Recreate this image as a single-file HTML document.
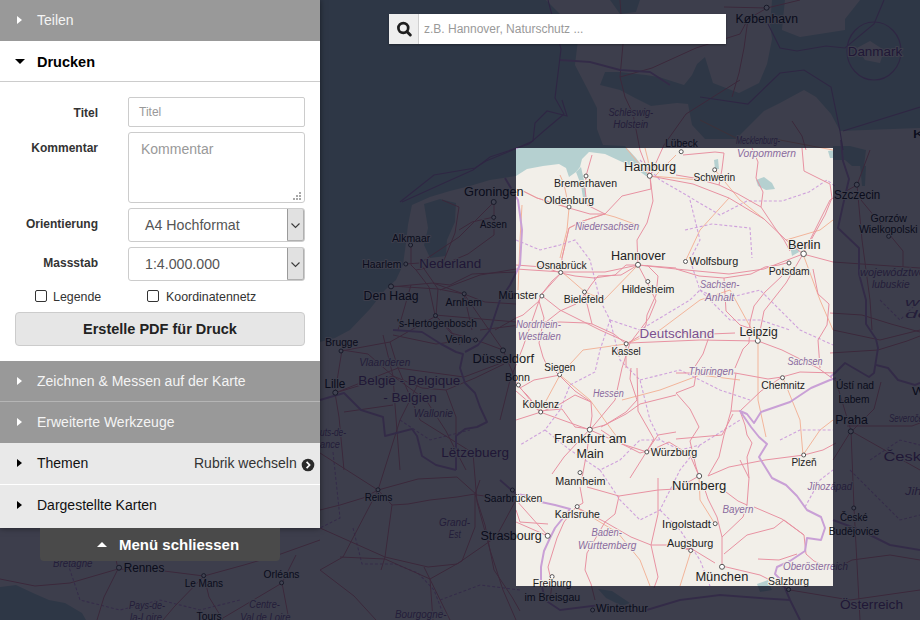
<!DOCTYPE html>
<html><head><meta charset="utf-8">
<style>
*{box-sizing:border-box}
html,body{margin:0;padding:0;width:920px;height:620px;overflow:hidden;background:#3d3f4c;font-family:"Liberation Sans",sans-serif}
#map{position:absolute;left:0;top:0;width:920px;height:620px}
#panel{position:absolute;left:0;top:0;width:320px;height:528px;background:#fff;box-shadow:0 0 6px rgba(0,0,0,.5)}
.hd{position:absolute;left:0;width:320px;height:41px;font-size:14px;line-height:41px}
.hd .t{position:absolute;left:37px;top:0}
.gray{background:#999;color:#f4f4f4}
.light{background:#e9e9e9;color:#111}
.tri-r{position:absolute;left:17px;top:16px;width:0;height:0;border-left:5.5px solid currentColor;border-top:4.5px solid transparent;border-bottom:4.5px solid transparent}
.tri-d{position:absolute;left:14.5px;top:59px;width:0;height:0;border-top:5px solid #000;border-left:5px solid transparent;border-right:5px solid transparent}
.lbl{position:absolute;font-size:12px;font-weight:bold;color:#333;text-align:right;width:98px;left:0}
.inp{position:absolute;left:128px;width:177px;border:1px solid #ccc;border-radius:2px;background:#fff}
.ph{position:absolute;color:#999}
.sel .btn{position:absolute;right:0;top:0;bottom:0;width:17px;background:#e1e1e1;border-left:1px solid #9a9a9a;border-right:1px solid #b0b0b0;border-bottom:1px solid #b0b0b0;border-radius:0 2px 2px 0}
.cb{position:absolute;width:12px;height:12px;border:1.5px solid #333;border-radius:2px;background:#fff}
</style></head><body>
<svg id="map" width="920" height="620" viewBox="0 0 920 620"><rect width="920" height="620" fill="#f2efe9"/>
<path d="M0,0 L546,0 L560,14 L578,40 L575,65 L587,88 L597,108 L597,129 L603,145 L625,146 L636,158 L649,175 L646,176 L632,166 L620,161 L605,154 L589,152 L582,159 L580,167 L576,172 L569,177 L566,168 L559,164 L543,166 L527,169 L516,176 L490,180 L470,186 L450,191 L430,197 L412,205 L408,225 L406,243 L403,265 L396,280 L385,290 L370,309 L350,330 L335,338 L320,342 L0,345 Z" fill="#b5d0d0"/>
<path d="M576,172 L581,167 L585,185 L586,198 L583,198 L581,185 Z" fill="#b5d0d0"/>
<path d="M424,204 L440,199 L456,203 L455,222 L447,240 L446,256 L430,258 L424,245 L428,228 Z" fill="#b5d0d0"/>
<path d="M600,85 L605,72 L620,72 L646,75 L659,77 L684,85 L692,75 L697,64 L705,57 L713,83 L739,93 L759,83 L767,64 L772,39 L770,24 L772,0 L785,0 L782,30 L800,37 L845,30 L845,19 L860,0 L920,0 L920,128 L840,131 L831,114 L816,97 L804,90 L780,103 L764,111 L736,139 L705,139 L692,125 L688,104 L677,103 L651,106 L635,98 L620,90 Z" fill="#b5d0d0"/>
<path d="M610,0 L640,0 L636,12 L620,14 Z" fill="#b5d0d0"/>
<path d="M0,587 L16,585 L33,593 L49,600 L65,603 L82,613 L86,620 L0,620 Z" fill="#b5d0d0"/>
<path d="M833,146 L850,146 L866,150 L864,166 L852,166 L845,160 L833,160 Z" fill="#b5d0d0"/>
<path d="M860,165 L866,166 L865,186 L862,186 Z" fill="#b5d0d0"/>
<path d="M857,48 L870,41 L884,50 L880,63 L865,60 Z" fill="#f2efe9"/>
<path d="M756,180 L764,177 L772,183 L775,189 L766,190 L758,186 Z" fill="#b5d0d0"/>
<path d="M828,151 L836,150 L836,158 L830,158 Z" fill="#b5d0d0"/>
<path d="M714,160 L718,159 L719,169 L715,169 Z" fill="#b5d0d0"/>
<path d="M790,245 L796,242 L799,252 L792,256 Z" fill="#b5d0d0"/>
<path d="M757,584 L768,580 L772,590 L760,592 Z" fill="#b5d0d0"/>
<path d="M598,589 L612,591 L630,603 L622,606 L606,598 Z" fill="#b5d0d0"/>
<g fill="none" stroke="#f3b59b" stroke-width="1"><path d="M569,208 L537,198 L523,191 L516,190"/><path d="M604,214 L583,221 L569,228 L562,258"/><path d="M569,208 L567,230 L560,258"/><path d="M569,208 L564,184 L560,175"/><path d="M522,205 L520,240 L518,290"/><path d="M650,176 L648,160 L645,148"/><path d="M650,176 L640,165 L626,148"/><path d="M676,155 L656,175"/><path d="M650,176 L676,178 L700,180"/><path d="M604,214 L615,217 L640,226"/><path d="M562,272 L585,292 L604,300 L638,265"/><path d="M626,344 L660,330 L700,300 L730,290 L758,341"/><path d="M715,170 L740,200 L764,219"/><path d="M685,262 L700,230 L729,198"/><path d="M560,375 L590,400 L622,444"/><path d="M540,412 L560,375 L583,350 L626,344"/><path d="M783,378 L800,420 L803,455"/><path d="M766,437 L758,400 L758,341"/><path d="M577,508 L618,533 L640,560 L650,586"/><path d="M715,524 L700,500 L699,476"/><path d="M691,551 L680,586"/><path d="M803,455 L820,430 L833,420"/><path d="M786,240 L820,230 L833,220"/><path d="M803,254 L820,300 L833,330"/><path d="M740,380 L700,375 L660,390 L622,400"/><path d="M700,120 L740,140 L780,140 L833,150"/></g>
<g fill="none" stroke="#cfa2dc" stroke-width="1.1" stroke-dasharray="3,2"><path d="M353,528 L362,564 L395,564 L418,573 L434,590 L444,616"/><path d="M333,452 L340,518 L320,528"/><path d="M440,600 L480,585 L520,590"/><path d="M870,460 L900,440 L920,445"/><path d="M850,470 L880,500 L900,520 L920,515"/><path d="M880,300 L900,320 L920,300"/><path d="M400,420 L430,440 L470,430"/><path d="M60,540 L80,600 L120,610 L160,600 L200,610 L240,600"/><path d="M516,240 L540,250 L560,245 L575,240 L590,260 L600,300 L610,320 L600,350 L595,372 L570,385 L560,410 L545,430 L520,445"/><path d="M640,160 L660,180 L676,189 L703,205 L720,215 L747,201 L782,201 L809,192 L827,180 L836,187"/><path d="M685,230 L712,224 L750,228 L752,258"/><path d="M690,200 L700,240 L690,260 L700,290 L720,300 L760,290 L780,310 L800,330 L833,345"/><path d="M610,320 L640,330 L665,315 L690,300 L700,290"/><path d="M610,320 L620,360 L640,380 L650,420 L660,440 L680,450 L700,445 L740,420"/><path d="M700,290 L730,320 L760,320 L790,330"/><path d="M640,380 L680,370 L720,390 L750,400"/><path d="M545,430 L570,450 L600,470 L620,460 L640,440 L660,440"/><path d="M600,470 L620,500 L640,520 L660,510 L680,470 L700,445"/><path d="M660,510 L680,530 L700,560 L710,586"/><path d="M780,440 L800,430 L833,430"/><path d="M805,507 L820,480 L833,470"/></g>
<g fill="none" stroke="#e892a2" stroke-width="1" stroke-linejoin="round"><path d="M736,373 L733,393 L731,411 L727,425 L724,435 L719,457 L708,476"/><path d="M782,377 L761,391 L740,411 L731,411"/><path d="M740,411 L745,425 L747,435 L752,443 L747,457 L749,478"/><path d="M708,476 L729,467 L765,460 L804,455 L823,450 L836,443"/><path d="M676,393 L694,386 L697,368"/><path d="M676,393 L690,409 L699,427 L690,441 L696,467 L699,476"/><path d="M676,439 L722,435 L733,414"/><path d="M782,377 L800,372 L836,373"/><path d="M676,373 L735,373 L768,379 L782,377"/><path d="M342,350 L368,354 L393,376 L422,388 L446,390 L475,378 L504,364"/><path d="M383,335 L393,376 L395,405 L400,470"/><path d="M335,393 L368,383 L393,376"/><path d="M335,393 L339,417 L344,470"/><path d="M446,390 L456,417 L456,451 L466,470"/><path d="M393,376 L426,400 L446,431 L456,451"/><path d="M393,335 L436,344 L475,339"/><path d="M344,412 L393,405"/><path d="M335,393 L342,350"/><path d="M587,487 L619,496 L658,490 L676,489 L699,476"/><path d="M576,507 L564,522 L557,538 L548,567 L552,584 L550,600"/><path d="M576,507 L605,522 L631,537 L651,545 L676,545 L691,551"/><path d="M619,496 L615,514 L605,522 L587,553 L585,570 L591,584 L595,600"/><path d="M658,478 L658,514 L651,545 L658,577 L654,588"/><path d="M580,487 L583,503 L576,507"/><path d="M548,536 L516,522"/><path d="M516,510 L520,522 L548,524"/><path d="M704,487 L708,499 L717,517 L722,537 L722,556 L722,567"/><path d="M722,537 L743,517 L747,505 L749,478 L740,460"/><path d="M724,554 L747,535 L774,528 L784,520 L804,535 L806,554 L814,561 L833,570"/><path d="M754,507 L782,519 L804,535"/><path d="M715,563 L692,549 L676,547"/><path d="M758,559 L779,560 L797,554"/><path d="M726,492 L738,501 L747,505"/><path d="M561,273 L575,276 L594,278 L615,275 L626,265 L638,265"/><path d="M638,265 L621,275 L598,276 L591,285 L585,294 L576,304 L560,311 L546,322 L520,325 L480,330"/><path d="M561,273 L552,281 L541,295 L539,301 L523,315 L516,318 L495,330"/><path d="M561,273 L543,267 L516,265"/><path d="M539,301 L544,318 L539,343 L543,357 L548,368"/><path d="M516,325 L560,322 L587,323 L592,324 L614,334 L626,344"/><path d="M626,344 L640,336 L646,325 L647,315 L656,295 L658,276 L647,265"/><path d="M626,344 L626,368"/><path d="M585,294 L587,304 L592,324"/><path d="M638,265 L676,268"/><path d="M676,175 L694,178 L719,185 L738,194 L761,207 L775,228 L784,240 L790,251"/><path d="M719,185 L722,169 L724,153 L715,152 L683,155"/><path d="M752,148 L758,162 L756,178 L763,192 L761,207"/><path d="M811,240 L825,215 L832,198 L830,184 L804,171 L802,148"/><path d="M676,269 L699,276 L724,278 L751,274 L765,267 L779,265 L790,262"/><path d="M782,276 L765,292 L754,306 L750,322 L749,343 L743,349 L735,368"/><path d="M724,278 L726,311 L740,325 L752,329"/><path d="M758,341 L782,350 L800,359 L818,368 L836,381"/><path d="M813,269 L818,294 L829,304 L827,325 L818,340 L820,368"/><path d="M735,333 L710,334 L676,333"/><path d="M710,334 L703,354 L694,368"/><path d="M552,368 L566,382 L575,391 L591,402 L592,416 L590,429"/><path d="M631,368 L630,379 L637,400 L626,412 L605,425 L590,429"/><path d="M516,391 L539,411 L562,409 L575,427 L590,429"/><path d="M601,427 L626,414 L640,404 L676,395"/><path d="M601,430 L622,444 L640,453 L647,451"/><path d="M590,429 L564,457 L552,474"/><path d="M590,429 L587,451 L582,478"/><path d="M637,368 L638,411 L654,439 L647,451"/><path d="M647,451 L658,435 L676,432"/><path d="M647,451 L630,478"/><path d="M516,420 L541,412 L560,404 L575,395 L591,402"/><path d="M541,412 L527,395 L518,386"/><path d="M560,375 L534,380 L520,388"/><path d="M830,353 L878,350 L907,341 L920,336"/><path d="M830,313 L862,315 L891,324 L920,332"/><path d="M847,426 L912,426 L920,423"/><path d="M881,382 L874,409 L852,431"/><path d="M833,570 L852,560 L890,555 L920,560"/><path d="M411,246 L411,265 L416,270 L429,287 L435,315 L450,330 L460,345"/><path d="M391,287 L411,285 L433,283 L464,294 L485,302 L516,304"/><path d="M416,270 L442,265 L468,254 L494,235 L494,202"/><path d="M442,265 L455,233 L459,207 L442,200"/><path d="M433,283 L450,285 L472,274 L516,272"/><path d="M494,217 L472,222 L459,230"/><path d="M464,294 L472,330"/><path d="M435,315 L516,322"/><path d="M411,285 L398,330"/><path d="M378,490 L392,505 L408,504 L430,500 L457,497 L475,494 L480,480"/><path d="M378,490 L363,498 L340,505 L320,510"/><path d="M392,505 L385,557 L381,570"/><path d="M340,557 L385,559 L430,579 L462,561 L475,527 L475,494"/><path d="M430,579 L433,620"/><path d="M475,494 L485,525 L494,570 L512,597 L520,611"/><path d="M320,570 L354,596 L376,620"/><path d="M650,176 L651,189 L622,196 L605,214 L590,214 L569,208 L537,198 L523,191 L516,190"/><path d="M605,214 L583,221 L569,228 L562,258 L561,273 L541,295 L523,347 L510,380 L500,420"/><path d="M650,176 L653,201 L647,223 L637,240 L638,265 L647,282 L656,301 L649,318 L630,343 L622,368 L615,400 L590,430"/><path d="M638,265 L676,269 L729,274 L764,269 L803,254"/><path d="M638,265 L605,272 L562,272 L516,269 L480,275 L440,290"/><path d="M650,176 L693,184 L729,198 L764,219 L786,240 L803,254"/><path d="M803,254 L786,283 L764,311 L758,341"/><path d="M650,176 L664,145 L686,114 L705,102 L740,80"/><path d="M605,214 L587,205 L585,189 L586,176 L592,155"/><path d="M650,176 L640,150 L633,114 L625,97 L620,77 L623,44 L620,0"/><path d="M803,254 L830,200 L857,185 L870,150"/><path d="M803,254 L833,262 L920,268"/><path d="M861,200 L903,251 L903,270"/><path d="M836,381 L851,431 L854,508 L860,620"/><path d="M851,431 L920,470"/><path d="M590,430 L622,444 L647,452 L669,442 L690,455 L699,476"/><path d="M833,460 L851,431"/><path d="M722,566 L760,575 L790,590 L850,600 L920,590"/><path d="M758,341 L700,340 L629,343"/><path d="M629,343 L600,330 L560,310 L541,295"/><path d="M420,263 L438,289 L464,294 L503,350 L518,385 L540,412 L590,430"/><path d="M391,286 L438,289"/><path d="M438,289 L436,316 L451,333 L476,340 L503,350"/><path d="M494,202 L459,237 L420,263 L405,264"/><path d="M341,351 L390,342 L436,316"/><path d="M335,393 L398,368 L464,377 L512,359"/><path d="M390,342 L398,368 L420,420 L473,453"/><path d="M378,490 L418,479 L457,477 L477,495 L516,500 L548,536"/><path d="M473,453 L477,502 L490,550 L503,590 L516,620"/><path d="M320,528 L385,557 L428,567 L457,564 L496,537 L516,500"/><path d="M378,490 L343,557 L320,570"/><path d="M378,490 L320,453"/><path d="M424,567 L450,620"/><path d="M378,490 L400,420 L420,380"/><path d="M118,569 L164,571 L204,576 L244,565 L278,555 L320,540"/><path d="M118,569 L104,597 L97,620"/><path d="M118,569 L70,583 L35,586 L0,579"/><path d="M204,576 L209,597 L223,620"/><path d="M223,618 L282,583 L296,555"/><path d="M204,576 L174,607 L163,620"/><path d="M118,569 L115,555"/><path d="M282,583 L289,620"/><path d="M857,185 L862,240 L870,300 L872,330"/><path d="M833,330 L880,340 L920,330"/><path d="M620,77 L652,68 L674,58 L696,48 L740,34 L748,19"/><path d="M724,7 L767,8 L800,0"/><path d="M767,8 L748,19 L744,48 L739,73 L732,97"/><path d="M792,121 L802,136 L806,150"/></g>
<g fill="none" stroke="#c9a0d6" stroke-width="2" stroke-linejoin="round"><path d="M836,378 L830,380 L811,388 L790,402 L761,412 L754,423 L747,414 L740,411 L751,427 L759,437 L767,444 L759,457 L772,478 L786,485 L797,496 L807,510 L821,517 L825,528 L821,540 L807,538 L805,551 L790,561 L777,567 L775,574 L782,581 L790,600 L800,620"/><path d="M500,480 L516,494 L529,496 L541,502 L555,505 L570,509 L563,518 L555,528 L550,538 L544,551 L541,567 L541,582 L545,600 L560,610 L600,605 L640,612 L680,600 L720,595 L760,598 L790,600"/><path d="M505,178 L518,200 L522,230 L520,265 L510,285 L500,300 L490,330 L478,345 L465,352"/><path d="M320,400 L344,393 L361,410 L383,417 L385,436 L412,429 L417,436 L422,456 L436,465 L456,470"/><path d="M393,330 L422,332 L441,344 L456,352 L463,354 L460,368 L465,383 L475,393 L480,407 L487,422 L477,427 L465,429 L456,436 L456,470"/><path d="M560,60 L590,62 L620,70 L650,72 L670,85"/><path d="M841,140 L843,161 L849,179 L843,205 L838,228 L859,248 L859,274 L866,300 L866,324 L876,339 L878,348 L874,373 L869,377 L845,363 L835,373 L830,377"/><path d="M876,365 L888,368 L898,380 L915,385 L920,383"/><path d="M833,520 L860,530 L890,545 L920,550"/></g>
<g fill="none" stroke="#b48cc4" stroke-width="1.2"><path d="M548,0 L561,49 L555,98 L564,114 L545,130 L529,144 L490,157 L473,170 L444,183 L402,202"/><path d="M562,100 L567,116 L547,111 L535,123 L533,141 L508,152 L486,161 L475,168 L434,175 L400,202"/><path d="M700,97 L748,104 L780,73 L804,70 L831,87 L840,131 L843,150"/><path d="M768,24 L780,48 L797,51 L826,46 L845,48 L874,24 L884,0"/><path d="M843,131 L920,107"/><ellipse cx="874" cy="51" rx="27" ry="29"/></g>
<g fill="#fff" stroke="#555" stroke-width="1"><circle cx="649.7" cy="175.8" r="2.5"/><circle cx="586" cy="176" r="2"/><circle cx="569" cy="207" r="2"/><circle cx="638" cy="264.8" r="2.5"/><circle cx="560.7" cy="272.5" r="2"/><circle cx="647.8" cy="281.5" r="2"/><circle cx="685.5" cy="261.5" r="2"/><circle cx="714.7" cy="169.8" r="2"/><circle cx="803.6" cy="253.8" r="2.8"/><circle cx="789" cy="263" r="2"/><circle cx="541.9" cy="296" r="2"/><circle cx="584.5" cy="292" r="2"/><circle cx="626.2" cy="343.8" r="2"/><circle cx="559.6" cy="374.7" r="2"/><circle cx="518.4" cy="385" r="2"/><circle cx="540.7" cy="412" r="2"/><circle cx="589.8" cy="429.7" r="2.5"/><circle cx="646.8" cy="452" r="2"/><circle cx="580" cy="472.6" r="2"/><circle cx="577.2" cy="506.6" r="2"/><circle cx="547.7" cy="535.8" r="2.5"/><circle cx="552.1" cy="576.6" r="2"/><circle cx="757.8" cy="340.8" r="2.5"/><circle cx="782.5" cy="377.7" r="2"/><circle cx="699.2" cy="476" r="2.5"/><circle cx="803.7" cy="455" r="2"/><circle cx="715.2" cy="523.7" r="2"/><circle cx="690.7" cy="550.5" r="2"/><circle cx="722" cy="566.8" r="2.5"/><circle cx="788.6" cy="589.5" r="2"/><circle cx="766.6" cy="7.7" r="2.5"/><circle cx="681.2" cy="151.7" r="2"/><circle cx="493.7" cy="202" r="2.5"/><circle cx="493.7" cy="217.4" r="2"/><circle cx="410.6" cy="245" r="2"/><circle cx="405.8" cy="264" r="2"/><circle cx="391" cy="286.4" r="2.5"/><circle cx="464.2" cy="293.8" r="2"/><circle cx="435.5" cy="315.6" r="2"/><circle cx="475.6" cy="340" r="2"/><circle cx="341" cy="351" r="2"/><circle cx="503" cy="350.4" r="2.5"/><circle cx="335.3" cy="392.7" r="2.5"/><circle cx="378" cy="489.8" r="2"/><circle cx="512.4" cy="490" r="2"/><circle cx="592.6" cy="610" r="2"/><circle cx="850.8" cy="431.4" r="2.5"/><circle cx="853.8" cy="508" r="2"/><circle cx="856.8" cy="184.7" r="2.5"/><circle cx="888.7" cy="236.3" r="2"/><circle cx="119" cy="567.7" r="2.5"/><circle cx="203.7" cy="575.6" r="2"/><circle cx="281.6" cy="582.8" r="2"/></g>
<g font-family="Liberation Sans" stroke="#f2efe9" stroke-width="2" paint-order="stroke" stroke-linejoin="round"><text x="624" y="171" font-size="12.5" fill="#222" textLength="52.0" lengthAdjust="spacingAndGlyphs">Hamburg</text><text x="554" y="187.4" font-size="10.5" fill="#222" textLength="63.0" lengthAdjust="spacingAndGlyphs">Bremerhaven</text><text x="544" y="203.6" font-size="10.5" fill="#222" textLength="50.0" lengthAdjust="spacingAndGlyphs">Oldenburg</text><text x="575" y="230" font-size="10" fill="#8a6b9e" font-style="italic" textLength="64.0" lengthAdjust="spacingAndGlyphs">Niedersachsen</text><text x="611" y="259.7" font-size="12.5" fill="#222" textLength="54.5" lengthAdjust="spacingAndGlyphs">Hannover</text><text x="536.6" y="268.9" font-size="10.5" fill="#222" textLength="50.0" lengthAdjust="spacingAndGlyphs">Osnabrück</text><text x="621.7" y="292.6" font-size="10.5" fill="#222" textLength="52.7" lengthAdjust="spacingAndGlyphs">Hildesheim</text><text x="689.6" y="265" font-size="10.5" fill="#222" textLength="48.6" lengthAdjust="spacingAndGlyphs">Wolfsburg</text><text x="693.4" y="181.4" font-size="10.5" fill="#222" textLength="41.9" lengthAdjust="spacingAndGlyphs">Schwerin</text><text x="737" y="157.2" font-size="10" fill="#8a6b9e" font-style="italic" textLength="59.0" lengthAdjust="spacingAndGlyphs">Vorpommern</text><text x="736" y="144" font-size="10" fill="#8a6b9e" font-style="italic" textLength="44.0" lengthAdjust="spacingAndGlyphs">Mecklenburg-</text><text x="788" y="248.5" font-size="12.5" fill="#222" textLength="32.5" lengthAdjust="spacingAndGlyphs">Berlin</text><text x="768.7" y="274.6" font-size="10.5" fill="#222" textLength="41.0" lengthAdjust="spacingAndGlyphs">Potsdam</text><text x="700" y="288.4" font-size="10" fill="#8a6b9e" font-style="italic" textLength="39.4" lengthAdjust="spacingAndGlyphs">Sachsen-</text><text x="705" y="301" font-size="10" fill="#8a6b9e" font-style="italic" textLength="29.0" lengthAdjust="spacingAndGlyphs">Anhalt</text><text x="498.6" y="299" font-size="10.5" fill="#222" textLength="39.2" lengthAdjust="spacingAndGlyphs">Münster</text><text x="563.7" y="303.3" font-size="10.5" fill="#222" textLength="40.0" lengthAdjust="spacingAndGlyphs">Bielefeld</text><text x="516" y="327.5" font-size="10" fill="#8a6b9e" font-style="italic" textLength="44.8" lengthAdjust="spacingAndGlyphs">Nordrhein-</text><text x="518" y="339.6" font-size="10" fill="#8a6b9e" font-style="italic" textLength="42.8" lengthAdjust="spacingAndGlyphs">Westfalen</text><text x="639.5" y="338.2" font-size="12.5" fill="#7b4f8f" textLength="74.8" lengthAdjust="spacingAndGlyphs">Deutschland</text><text x="611.6" y="354.9" font-size="10.5" fill="#222" textLength="29.1" lengthAdjust="spacingAndGlyphs">Kassel</text><text x="544.3" y="371.1" font-size="10.5" fill="#222" textLength="31.0" lengthAdjust="spacingAndGlyphs">Siegen</text><text x="472.5" y="363.3" font-size="12" fill="#222" textLength="61.5" lengthAdjust="spacingAndGlyphs">Düsseldorf</text><text x="505" y="380.8" font-size="10.5" fill="#222" textLength="25.0" lengthAdjust="spacingAndGlyphs">Bonn</text><text x="593" y="397" font-size="10" fill="#8a6b9e" font-style="italic" textLength="30.7" lengthAdjust="spacingAndGlyphs">Hessen</text><text x="522.5" y="408.2" font-size="10.5" fill="#222" textLength="36.5" lengthAdjust="spacingAndGlyphs">Koblenz</text><text x="554" y="443.4" font-size="12.5" fill="#222" textLength="72.5" lengthAdjust="spacingAndGlyphs">Frankfurt am</text><text x="576.6" y="458.4" font-size="12.5" fill="#222" textLength="27.1" lengthAdjust="spacingAndGlyphs">Main</text><text x="650.7" y="455.8" font-size="10.5" fill="#222" textLength="46.5" lengthAdjust="spacingAndGlyphs">Würzburg</text><text x="555.2" y="484.7" font-size="10.5" fill="#222" textLength="50.3" lengthAdjust="spacingAndGlyphs">Mannheim</text><text x="484" y="502.2" font-size="10.5" fill="#222" textLength="58.3" lengthAdjust="spacingAndGlyphs">Saarbrücken</text><text x="554.7" y="517.7" font-size="10.5" fill="#222" textLength="45.2" lengthAdjust="spacingAndGlyphs">Karlsruhe</text><text x="480.4" y="539.9" font-size="12.5" fill="#222" textLength="61.4" lengthAdjust="spacingAndGlyphs">Strasbourg</text><text x="591.6" y="535.8" font-size="10" fill="#8a6b9e" font-style="italic" textLength="30.2" lengthAdjust="spacingAndGlyphs">Baden-</text><text x="578" y="548.7" font-size="10" fill="#8a6b9e" font-style="italic" textLength="58.5" lengthAdjust="spacingAndGlyphs">Württemberg</text><text x="532.8" y="587.4" font-size="10.5" fill="#222" textLength="38.7" lengthAdjust="spacingAndGlyphs">Freiburg</text><text x="524.4" y="601" font-size="10.5" fill="#222" textLength="55.8" lengthAdjust="spacingAndGlyphs">im Breisgau</text><text x="739.4" y="336" font-size="12.5" fill="#222" textLength="38.3" lengthAdjust="spacingAndGlyphs">Leipzig</text><text x="787.4" y="365" font-size="10" fill="#8a6b9e" font-style="italic" textLength="35.1" lengthAdjust="spacingAndGlyphs">Sachsen</text><text x="688.6" y="375.2" font-size="10" fill="#8a6b9e" font-style="italic" textLength="45.0" lengthAdjust="spacingAndGlyphs">Thüringen</text><text x="761.2" y="389.3" font-size="10.5" fill="#222" textLength="43.8" lengthAdjust="spacingAndGlyphs">Chemnitz</text><text x="672" y="489.9" font-size="12.5" fill="#222" textLength="54.3" lengthAdjust="spacingAndGlyphs">Nürnberg</text><text x="791.4" y="466.1" font-size="10.5" fill="#222" textLength="25.2" lengthAdjust="spacingAndGlyphs">Plzeň</text><text x="807.6" y="489.5" font-size="10" fill="#8a6b9e" font-style="italic" textLength="44.5" lengthAdjust="spacingAndGlyphs">Jihozápad</text><text x="722.5" y="513.1" font-size="10" fill="#8a6b9e" font-style="italic" textLength="30.9" lengthAdjust="spacingAndGlyphs">Bayern</text><text x="662" y="527.5" font-size="10.5" fill="#222" textLength="48.8" lengthAdjust="spacingAndGlyphs">Ingolstadt</text><text x="667" y="546.6" font-size="10.5" fill="#222" textLength="46.4" lengthAdjust="spacingAndGlyphs">Augsburg</text><text x="695.4" y="580.5" font-size="12.5" fill="#222" textLength="52.9" lengthAdjust="spacingAndGlyphs">München</text><text x="783" y="570.1" font-size="10" fill="#8a6b9e" font-style="italic" textLength="65.0" lengthAdjust="spacingAndGlyphs">Oberösterreich</text><text x="768" y="584.8" font-size="10.5" fill="#222" textLength="41.0" lengthAdjust="spacingAndGlyphs">Salzburg</text><text x="735.6" y="23" font-size="12" fill="#222" textLength="62.4" lengthAdjust="spacingAndGlyphs">København</text><text x="847.7" y="55.7" font-size="12" fill="#7b4f8f" textLength="54.5" lengthAdjust="spacingAndGlyphs">Danmark</text><text x="608.4" y="116.1" font-size="10" fill="#8a6b9e" font-style="italic" textLength="44.8" lengthAdjust="spacingAndGlyphs">Schleswig-</text><text x="613.2" y="128.2" font-size="10" fill="#8a6b9e" font-style="italic" textLength="35.1" lengthAdjust="spacingAndGlyphs">Holstein</text><text x="665.2" y="147.1" font-size="10.5" fill="#222" textLength="32.7" lengthAdjust="spacingAndGlyphs">Lübeck</text><text x="464" y="196" font-size="12" fill="#222" textLength="59.7" lengthAdjust="spacingAndGlyphs">Groningen</text><text x="480" y="228.2" font-size="10.5" fill="#222" textLength="26.8" lengthAdjust="spacingAndGlyphs">Assen</text><text x="391.9" y="241.5" font-size="10.5" fill="#222" textLength="38.3" lengthAdjust="spacingAndGlyphs">Alkmaar</text><text x="362.3" y="267.6" font-size="10.5" fill="#222" textLength="39.2" lengthAdjust="spacingAndGlyphs">Haarlem</text><text x="419.3" y="267.6" font-size="12" fill="#7b4f8f" textLength="61.9" lengthAdjust="spacingAndGlyphs">Nederland</text><text x="363.6" y="300.3" font-size="12" fill="#222" textLength="54.9" lengthAdjust="spacingAndGlyphs">Den Haag</text><text x="445.5" y="305.6" font-size="10.5" fill="#222" textLength="36.5" lengthAdjust="spacingAndGlyphs">Arnhem</text><text x="397" y="327.3" font-size="10.5" fill="#222" textLength="79.9" lengthAdjust="spacingAndGlyphs">'s-Hertogenbosch</text><text x="445.5" y="343" font-size="10.5" fill="#222" textLength="25.7" lengthAdjust="spacingAndGlyphs">Venlo</text><text x="325.2" y="346" font-size="10.5" fill="#222" textLength="33.1" lengthAdjust="spacingAndGlyphs">Brugge</text><text x="359.2" y="365.7" font-size="10" fill="#8a6b9e" font-style="italic" textLength="51.0" lengthAdjust="spacingAndGlyphs">Vlaanderen</text><text x="324.4" y="387.5" font-size="12" fill="#222" textLength="20.9" lengthAdjust="spacingAndGlyphs">Lille</text><text x="358.3" y="385.3" font-size="12" fill="#7b4f8f" textLength="102.0" lengthAdjust="spacingAndGlyphs">Belgie - Belgique</text><text x="383.2" y="401.9" font-size="12" fill="#7b4f8f" textLength="53.6" lengthAdjust="spacingAndGlyphs">- Belgien</text><text x="413.7" y="416.7" font-size="10" fill="#8a6b9e" font-style="italic" textLength="39.2" lengthAdjust="spacingAndGlyphs">Wallonie</text><text x="441.3" y="456.5" font-size="12" fill="#7b4f8f" textLength="67.8" lengthAdjust="spacingAndGlyphs">Lëtzebuerg</text><text x="364.7" y="500.5" font-size="10.5" fill="#222" textLength="27.7" lengthAdjust="spacingAndGlyphs">Reims</text><text x="439" y="526" font-size="10" fill="#8a6b9e" font-style="italic" textLength="31.0" lengthAdjust="spacingAndGlyphs">Grand-</text><text x="448.8" y="538" font-size="10" fill="#8a6b9e" font-style="italic" textLength="12.0" lengthAdjust="spacingAndGlyphs">Est</text><text x="395" y="618.2" font-size="10" fill="#8a6b9e" font-style="italic" textLength="51.5" lengthAdjust="spacingAndGlyphs">Bourgogne-</text><text x="320" y="436.3" font-size="10" fill="#8a6b9e" font-style="italic" textLength="26.0" lengthAdjust="spacingAndGlyphs">uts-de-</text><text x="320" y="448.4" font-size="10" fill="#8a6b9e" font-style="italic" textLength="20.0" lengthAdjust="spacingAndGlyphs">ance</text><text x="596" y="612.4" font-size="10.5" fill="#222" textLength="52.0" lengthAdjust="spacingAndGlyphs">Winterthur</text><text x="835.2" y="424" font-size="12" fill="#222" textLength="32.6" lengthAdjust="spacingAndGlyphs">Praha</text><text x="883.5" y="460.8" font-size="12" fill="#7b4f8f" textLength="46.5" lengthAdjust="spacingAndGlyphs">Česko</text><text x="905" y="495" font-size="10" fill="#8a6b9e" font-style="italic" textLength="30.0" lengthAdjust="spacingAndGlyphs">Jihoč</text><text x="840" y="521" font-size="10.5" fill="#222" textLength="27.8" lengthAdjust="spacingAndGlyphs">České</text><text x="828.7" y="534.8" font-size="10.5" fill="#222" textLength="50.5" lengthAdjust="spacingAndGlyphs">Budějovice</text><text x="840" y="608.5" font-size="12" fill="#7b4f8f" textLength="63.0" lengthAdjust="spacingAndGlyphs">Österreich</text><text x="889" y="421.6" font-size="10" fill="#8a6b9e" font-style="italic" textLength="46.0" lengthAdjust="spacingAndGlyphs">Severočeský</text><text x="834.1" y="198.5" font-size="12" fill="#222" textLength="46.2" lengthAdjust="spacingAndGlyphs">Szczecin</text><text x="870.6" y="221.6" font-size="10.5" fill="#222" textLength="36.4" lengthAdjust="spacingAndGlyphs">Gorzów</text><text x="858.9" y="233.3" font-size="10.5" fill="#222" textLength="58.7" lengthAdjust="spacingAndGlyphs">Wielkopolski</text><text x="860" y="276.1" font-size="10" fill="#8a6b9e" font-style="italic" textLength="65.0" lengthAdjust="spacingAndGlyphs">województwo</text><text x="872" y="287.8" font-size="10" fill="#8a6b9e" font-style="italic" textLength="37.6" lengthAdjust="spacingAndGlyphs">lubuskie</text><text x="836" y="389.4" font-size="10.5" fill="#222" textLength="38.0" lengthAdjust="spacingAndGlyphs">Ústí nad</text><text x="838.4" y="402.8" font-size="10.5" fill="#222" textLength="31.1" lengthAdjust="spacingAndGlyphs">Labem</text><text x="905" y="306" font-size="10" fill="#8a6b9e" font-style="italic" textLength="30.0" lengthAdjust="spacingAndGlyphs">woj</text><text x="912" y="395" font-size="10.5" fill="#222" textLength="13.0" lengthAdjust="spacingAndGlyphs">W</text><text x="905" y="318" font-size="10" fill="#8a6b9e" font-style="italic" textLength="30.0" lengthAdjust="spacingAndGlyphs">dol</text><text x="912.6" y="137.7" font-size="10.5" fill="#222" textLength="12.4" lengthAdjust="spacingAndGlyphs">K</text><text x="123.7" y="572" font-size="12" fill="#222" textLength="40.6" lengthAdjust="spacingAndGlyphs">Rennes</text><text x="184.7" y="587" font-size="10.5" fill="#222" textLength="38.4" lengthAdjust="spacingAndGlyphs">Le Mans</text><text x="263.6" y="578" font-size="10.5" fill="#222" textLength="35.9" lengthAdjust="spacingAndGlyphs">Orléans</text><text x="196.6" y="620" font-size="10.5" fill="#222" textLength="25.1" lengthAdjust="spacingAndGlyphs">Tours</text><text x="53" y="567.3" font-size="10" fill="#8a6b9e" font-style="italic" textLength="39.5" lengthAdjust="spacingAndGlyphs">Bretagne</text><text x="129" y="608.6" font-size="10" fill="#8a6b9e" font-style="italic" textLength="36.0" lengthAdjust="spacingAndGlyphs">Pays-de-</text><text x="130" y="620.5" font-size="10" fill="#8a6b9e" font-style="italic" textLength="32.0" lengthAdjust="spacingAndGlyphs">la-Loire</text><text x="249.3" y="608" font-size="10" fill="#8a6b9e" font-style="italic" textLength="30.5" lengthAdjust="spacingAndGlyphs">Centre-</text><text x="240.3" y="620.5" font-size="10" fill="#8a6b9e" font-style="italic" textLength="50.2" lengthAdjust="spacingAndGlyphs">Val de Loire</text></g>
<path d="M0,0 H920 V620 H0 Z M516,148 V586 H833 V148 Z" fill="rgba(4,7,26,0.76)" fill-rule="evenodd"/></svg>

<div id="panel">
  <div class="hd gray" style="top:0;height:41px;line-height:40px"><span class="tri-r" style="color:#fff"></span><span class="t">Teilen</span></div>
  <div class="hd" style="top:41px;background:#fff;border-bottom:1px solid #ccc;height:41px;font-weight:bold;color:#000;font-size:14.5px"><span class="t" style="top:1px">Drucken</span></div>
  <span class="tri-d"></span>

  <div class="lbl" style="top:106px">Titel</div>
  <div class="inp" style="top:97px;height:30px"><span class="ph" style="left:10px;top:7px;font-size:12px">Titel</span></div>

  <div class="lbl" style="top:141px">Kommentar</div>
  <div class="inp" style="top:132px;height:71px;border-radius:3px"><span class="ph" style="left:12px;top:8px;font-size:14px">Kommentar</span><svg style="position:absolute;left:164px;top:59px" width="10" height="10"><g fill="#a8a8a8"><rect x="6" y="0" width="2" height="2"/><rect x="3" y="3" width="2" height="2"/><rect x="6" y="3" width="2" height="2"/><rect x="0" y="6" width="2" height="2"/><rect x="3" y="6" width="2" height="2"/><rect x="6" y="6" width="2" height="2"/></g></svg></div>

  <div class="lbl" style="top:217px">Orientierung</div>
  <div class="inp sel" style="top:208px;height:34px;border-radius:3px"><span class="ph" style="left:16px;top:8px;font-size:14.2px;color:#555">A4 Hochformat</span><span class="btn"><svg width="16" height="32" style="position:absolute;left:0;top:0"><path d="M3.5,14.5 L7.5,18.5 L11.5,14.5" fill="none" stroke="#3a3a3a" stroke-width="1.1"/></svg></span></div>

  <div class="lbl" style="top:256px">Massstab</div>
  <div class="inp sel" style="top:247px;height:34px;border-radius:3px"><span class="ph" style="left:16px;top:8px;font-size:14.2px;color:#555">1:4.000.000</span><span class="btn"><svg width="16" height="32" style="position:absolute;left:0;top:0"><path d="M3.5,14.5 L7.5,18.5 L11.5,14.5" fill="none" stroke="#3a3a3a" stroke-width="1.1"/></svg></span></div>

  <span class="cb" style="left:35px;top:290px"></span><span style="position:absolute;left:53px;top:290px;font-size:12.4px;color:#333">Legende</span>
  <span class="cb" style="left:147px;top:290px"></span><span style="position:absolute;left:166px;top:290px;font-size:12.4px;color:#333">Koordinatennetz</span>

  <div style="position:absolute;left:15px;top:312px;width:290px;height:34px;background:#e6e6e6;border:1px solid #ccc;border-radius:4px;text-align:center;font-weight:bold;font-size:14.5px;line-height:32px;color:#222">Erstelle PDF für Druck</div>

  <div class="hd gray" style="top:361px;border-bottom:1px solid #b5b5b5"><span class="tri-r" style="color:#fff"></span><span class="t">Zeichnen &amp; Messen auf der Karte</span></div>
  <div class="hd gray" style="top:402px"><span class="tri-r" style="color:#fff"></span><span class="t">Erweiterte Werkzeuge</span></div>
  <div class="hd light" style="top:443px;border-bottom:1px solid #fff;height:42px"><span class="tri-r" style="color:#000"></span><span class="t">Themen</span><span style="position:absolute;left:194px;top:0;color:#333">Rubrik wechseln</span><svg style="position:absolute;left:301px;top:15px" width="14" height="14"><circle cx="7" cy="7" r="6.3" fill="#2b2b2b"/><path d="M5.6,3.9 L8.6,7 L5.6,10.1" fill="none" stroke="#fff" stroke-width="1.7"/></svg></div>
  <div class="hd light" style="top:485px;height:43px;line-height:41px"><span class="tri-r" style="color:#000"></span><span class="t">Dargestellte Karten</span></div>
</div>
<div style="position:absolute;left:40px;top:528px;width:240px;height:33px;background:#4a4a4a;border-radius:0 0 4px 4px;color:#fff;font-weight:bold;font-size:15px;line-height:33px"><span style="position:absolute;left:57px;top:14px;border-bottom:5px solid #fff;border-left:5px solid transparent;border-right:5px solid transparent;width:0;height:0"></span><span style="position:absolute;left:79px">Menü schliessen</span></div>

<div style="position:absolute;left:389px;top:14px;width:337px;height:30px;background:#fff;box-shadow:0 1px 2px rgba(0,0,0,.35);overflow:hidden">
  <div style="position:absolute;left:0;top:0;width:30px;height:30px;background:#eee;border-right:1px solid #cfcfcf"></div>
  <svg style="position:absolute;left:0;top:0" width="30" height="30"><circle cx="14.3" cy="14" r="4.9" fill="none" stroke="#1e1e1e" stroke-width="2.7"/><path d="M17.8,17.5 L21.3,21" stroke="#1e1e1e" stroke-width="3" stroke-linecap="round"/></svg>
  <span style="position:absolute;left:35px;top:8px;font-size:12px;color:#999">z.B. Hannover, Naturschutz ...</span>
</div>
</body></html>
